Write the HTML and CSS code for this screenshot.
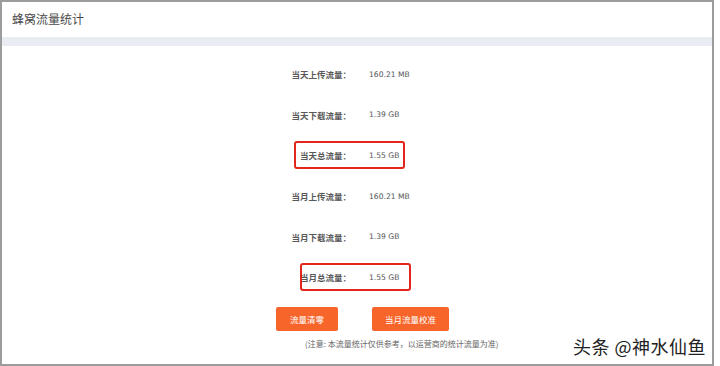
FILE: index.html
```html
<!DOCTYPE html>
<html lang="zh">
<head>
<meta charset="utf-8">
<title>蜂窝流量统计</title>
<link rel="stylesheet" href="styles.css">
</head>
<body>
<div class="frame">
  <div class="header">蜂窝流量统计</div>
  <div class="band"></div>
  <div class="stats">
    <div class="row"><span class="label">当天上传流量：</span><span class="value">160.21 MB</span></div>
    <div class="row"><span class="label">当天下载流量：</span><span class="value">1.39 GB</span></div>
    <div class="row mark mark-day"><span class="label">当天总流量：</span><span class="value">1.55 GB</span></div>
    <div class="row"><span class="label">当月上传流量：</span><span class="value">160.21 MB</span></div>
    <div class="row"><span class="label">当月下载流量：</span><span class="value">1.39 GB</span></div>
    <div class="row mark mark-month"><span class="label">当月总流量：</span><span class="value">1.55 GB</span></div>
  </div>
  <div class="actions">
    <button class="btn btn-clear">流量清零</button>
    <button class="btn btn-calib">当月流量校准</button>
  </div>
  <div class="note">(注意: 本流量统计仅供参考，以运营商的统计流量为准)</div>
  <div class="watermark">头条 @神水仙鱼</div>
</div>
</body>
</html>
```

FILE: styles.css
```css
html, body {
  margin: 0;
  padding: 0;
  background: #ffffff;
}
body {
  width: 720px;
  height: 366px;
  overflow: hidden;
  font-family: "Noto Sans CJK SC", "DejaVu Sans", sans-serif;
}
.frame {
  position: relative;
  box-sizing: border-box;
  width: 714px;
  height: 366px;
  border: 2px solid #9c9c9c;
  background: #fff;
}
.header {
  height: 35px;
  line-height: 33px;
  padding-left: 10px;
  font-size: 12px;
  color: #4a4a4a;
}
.band {
  height: 9px;
  background: #e9ecf3;
}
.stats {
  width: 220px;
  margin: 8px auto 0;
  display: flex;
  flex-direction: column;
}
.row {
  position: relative;
  height: 40.6px;
  display: flex;
  align-items: center;
  gap: 20px;
}
.label {
  width: 104px;
  text-align: right;
  font-size: 8.5px;
  font-weight: bold;
  color: #595959;
  margin-right: -2px;
}
.value {
  font-family: "DejaVu Sans", sans-serif;
  font-size: 7.6px;
  color: #555;
}
.mark::after {
  content: "";
  position: absolute;
  top: 6px;
  width: 107px;
  height: 24px;
  border: 2px solid #e3261c;
  border-radius: 3px;
}
.mark-day::after { left: 47px; }
.mark-month::after { left: 53px; }
.actions {
  display: flex;
  justify-content: center;
  gap: 34px;
  padding-left: 11px;
  margin-top: 9px;
}
.btn {
  height: 24px;
  border: none;
  border-radius: 2px;
  background: #f8652a;
  color: #fff;
  font-family: "Noto Sans CJK SC", sans-serif;
  font-size: 8.5px;
  padding: 0;
}
.btn-clear { width: 62px; }
.btn-calib { width: 77px; }
.note {
  margin-top: 7px;
  padding-left: 303px;
  font-size: 8px;
  color: #666;
}
.watermark {
  position: absolute;
  left: 571px;
  top: 331px;
  font-size: 18px;
  color: #222;
  letter-spacing: 0.5px;
}
```
